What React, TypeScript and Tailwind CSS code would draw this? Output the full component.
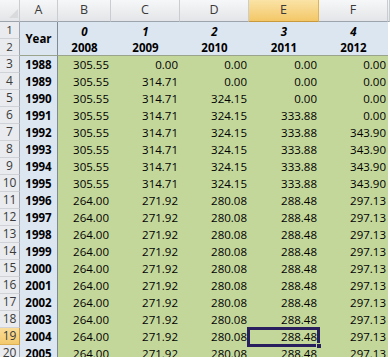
import React from "react";

const years = Array.from({ length: 18 }, (_, i) => 1988 + i);

function val(col: number, year: number): string {
  const hi = [305.55, 314.71, 324.15, 333.88, 343.9];
  const lo = [264.0, 271.92, 280.08, 288.48, 297.13];
  if (year - 1988 < col) return "0.00";
  if (year <= 1995) return hi[col].toFixed(2);
  return lo[col].toFixed(2);
}

const colHead =
  "flex items-center justify-center border-r border-b border-r-[#c9ccd1] border-b-[#9ea4ac] bg-linear-to-b from-[#f6f7f8] to-[#e3e5e8] text-[#3a3a3a]";
const colHeadSel =
  "flex items-center justify-center border-r border-b border-r-[#e0b450] border-b-[#c89a3c] bg-linear-to-b from-[#fae3a6] to-[#f3c766] text-[#3a3a3a]";
const rowHead =
  "flex items-center justify-center border-r border-b border-r-[#9ea4ac] border-b-[#cfd2d7] bg-[#e9ebee] text-[#3a3a3a]";
const rowHeadSel =
  "flex items-center justify-center border-r border-b border-r-[#c89a3c] border-b-[#dcb057] bg-linear-to-b from-[#f9dc98] to-[#f3c96c] text-[#3a3a3a]";

export default function App() {
  return (
    <div
      className="w-[390px] h-[357px] overflow-hidden bg-white text-black"
      style={{ fontFamily: '"Open Sans", "Liberation Sans", sans-serif' }}
    >
      <div className="grid grid-cols-[20px_38px_53px_69px_69px_70px_69px_1fr] grid-rows-[22px_repeat(20,17px)] text-[11.5px] leading-none">
        <div className="relative border-r border-b border-r-[#c9ccd1] border-b-[#9ea4ac] bg-linear-to-b from-[#f6f7f8] to-[#e3e5e8]">
          <div className="absolute left-[9px] top-[9px] w-[9px] h-[9px] bg-[#d9dadc] [clip-path:polygon(100%_0,100%_100%,0_100%)]" />
        </div>
        {["A", "B", "C", "D", "E", "F"].map((l) => (
          <div key={l} className={`${l === "E" ? colHeadSel : colHead} text-[12.5px]`}>
            {l}
          </div>
        ))}
        <div className={colHead} />

        <div className={rowHead}>1</div>
        <div className="row-span-2 flex items-center justify-center bg-[#dce6f1] border-r border-r-[#7f8a96] border-b border-b-[#9aa48d] font-bold">
          Year
        </div>
        {["0", "1", "2", "3", "4"].map((n) => (
          <div key={n} className="flex items-center justify-center bg-[#dce6f1] font-bold italic pt-[2px]">
            {n}
          </div>
        ))}
        <div className="bg-white" />

        <div className={rowHead}>2</div>
        {[2008, 2009, 2010, 2011, 2012].map((y) => (
          <div key={y} className="flex items-center justify-center bg-[#dce6f1] font-bold border-b border-b-[#9aa48d] pt-[2px]">
            {y}
          </div>
        ))}
        <div className="bg-white" />

        {years.map((y, i) => {
          const r = i + 3;
          const sel = r === 19;
          return (
            <React.Fragment key={y}>
              <div className={`${sel ? rowHeadSel : rowHead} text-[12px]`}>{r}</div>
              <div className="flex items-center justify-center bg-[#dce6f1] border-r border-r-[#7f8a96] font-bold pt-[1px]">
                {y}
              </div>
              {[0, 1, 2, 3, 4].map((c) => (
                <div
                  key={c}
                  className={`relative flex items-center justify-end bg-[#c4d79b] pr-[2px] pt-[1px] ${sel && c === 3 ? "z-10" : ""}`}
                >
                  {val(c, y)}
                  {sel && c === 3 && (
                    <>
                      <div className="absolute left-[-2px] top-[-1px] right-[-1px] bottom-[-2px] border-solid border-[3px] border-[#2a1f5e] pointer-events-none" />
                      <div className="absolute right-[-3px] bottom-[-4px] w-[6px] h-[6px] bg-[#2a1f5e] border border-[#c4d79b]" />
                    </>
                  )}
                </div>
              ))}
              <div className="bg-white" />
            </React.Fragment>
          );
        })}
      </div>
    </div>
  );
}
